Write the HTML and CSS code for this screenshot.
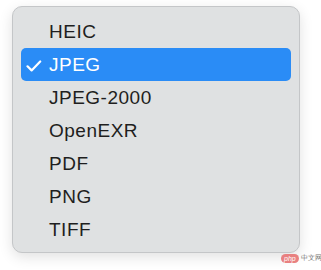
FILE: index.html
```html
<!DOCTYPE html>
<html lang="en">
<head>
<meta charset="UTF-8">
<title>Formato</title>
<link rel="stylesheet" href="styles.css">
</head>
<body>
<div class="escena">
<ul class="menu">
<li class="opcion">HEIC</li>
<li class="opcion activa"><svg class="check" width="16" height="12" viewBox="0 0 16 12"><path d="M1.5 6.3 L5.6 10.4 L14.2 1.5" fill="none" stroke="#fff" stroke-width="2.2" stroke-linecap="round" stroke-linejoin="round"/></svg>JPEG</li>
<li class="opcion">JPEG-2000</li>
<li class="opcion">OpenEXR</li>
<li class="opcion">PDF</li>
<li class="opcion">PNG</li>
<li class="opcion">TIFF</li>
</ul>
<div class="marca"><span class="php">php</span><span class="cn">中文网</span></div>
</div>
</body>
</html>
```

FILE: styles.css
```css
  body{
	margin: 0;
	background-color: #ffffff;
	font-family: "Liberation Sans", Arial, sans-serif;
  }

  .escena{
	width: 321px;
	height: 270px;
	padding: 6px 0 0 12px;
	box-sizing: border-box;
	position: relative;
  }

  .menu{
	list-style: none;
	margin: 0;
	padding: 8px 8px;
	width: 288px;
	height: 247px;
	box-sizing: border-box;
	background-color: #dfe1e2;
	border: 1px solid #c4c6c8;
	border-radius: 10px;
	box-shadow: 0 4px 14px rgba(0,0,0,0.12);
  }

  .opcion{
	height: 33px;
	display: flex;
	align-items: center;
	padding-left: 28px;
	border-radius: 5px;
	color: #1e1e20;
	font-size: 19px;
	letter-spacing: 0.5px;
	position: relative;
  }

  .activa{
	background-color: #2a8cf6;
	color: #ffffff;
  }

  .check{
	position: absolute;
	left: 5px;
	top: 12px;
  }

  .marca{
	position: absolute;
	left: 281px;
	top: 253px;
	display: flex;
	align-items: center;
	gap: 2px;
	font-size: 7px;
	color: #777;
	white-space: nowrap;
  }

  .php{
	background-color: #e88080;
	color: #fff;
	border-radius: 5px;
	padding: 0 3px;
	line-height: 9px;
	font-style: italic;
  }
```
